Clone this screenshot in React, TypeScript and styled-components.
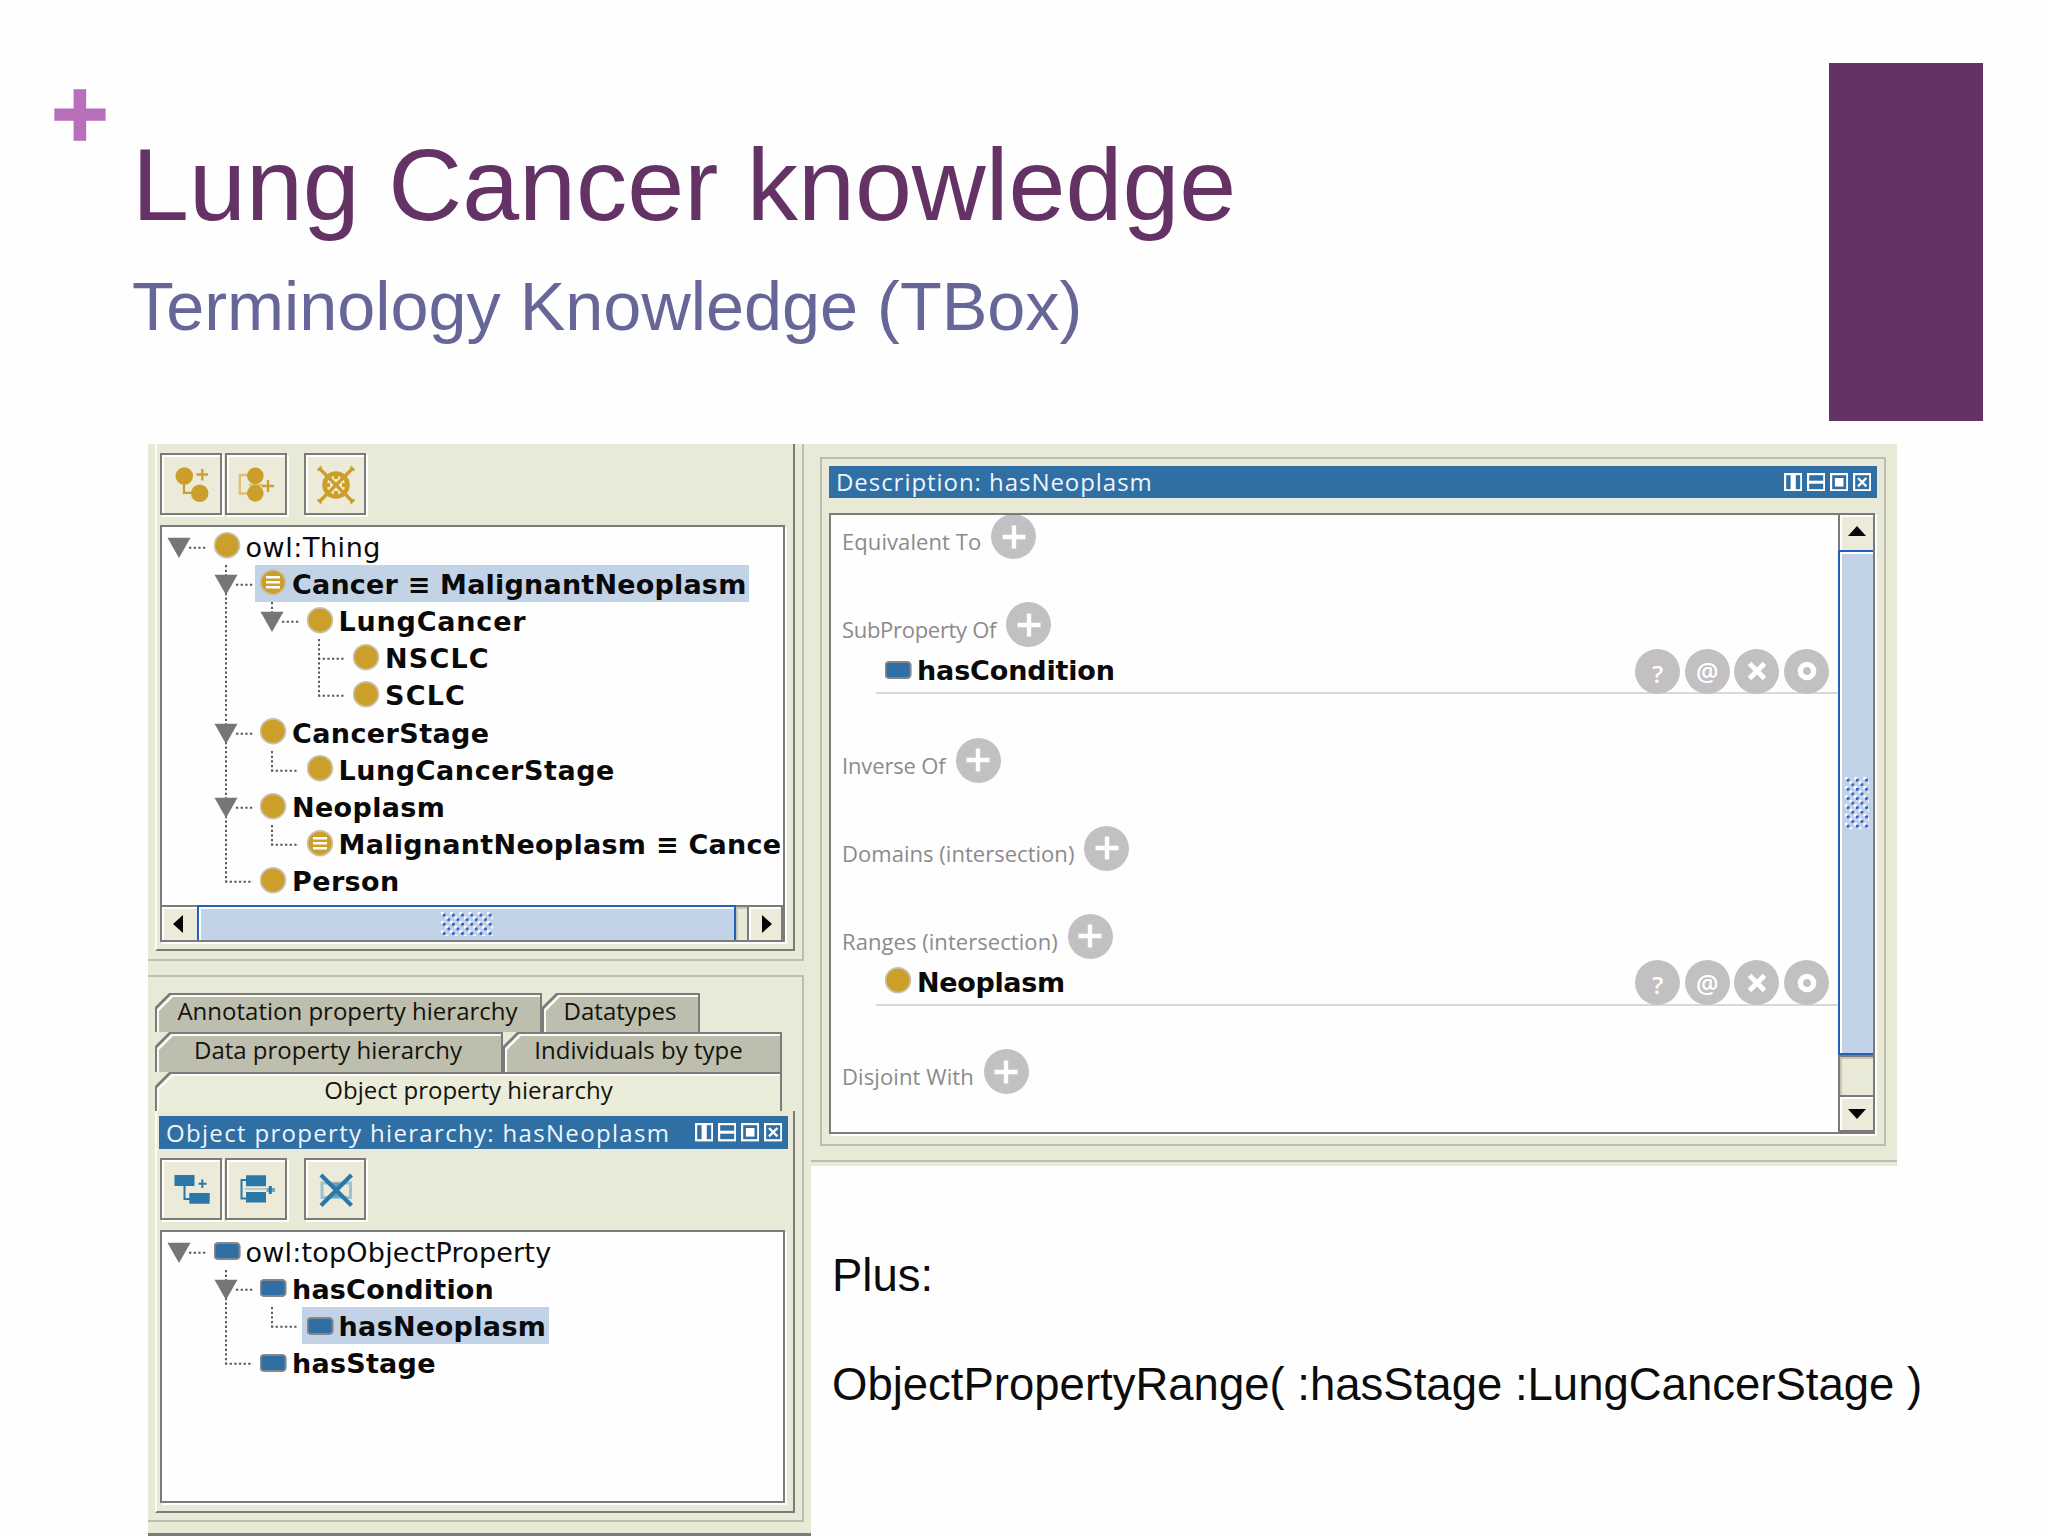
import React from "react";
import styled, { createGlobalStyle, css } from "styled-components";

const beige = "#e8e9d7";
const gray = "#7c7a7a";
const softLine = "#bdbeae";
const gold = "#cc9f2a";
const blue = "#2f6fa4";
const select = "#c2d3e8";

const lucida = `"Open Sans", "Noto Sans", sans-serif`;
const verdana = `"DejaVu Sans", sans-serif`;
const arial = `"Liberation Sans", Arial, sans-serif`;

const GlobalStyle = createGlobalStyle`
  * { box-sizing: border-box; }
  body { margin: 0; background: #fefefe; }
  svg { display: block; flex: none; }
`;

const Slide = styled.main`
  width: 2048px;
  height: 1536px;
  overflow: hidden;
  display: flex;
  flex-direction: column;
  background: #fefefe;
`;

const Header = styled.header`
  height: 444px;
  flex: none;
  display: flex;
  align-items: flex-start;
`;

const PlusMark = styled.div`
  width: 132px;
  padding: 54px 0 0 51px;
  font: bold 99px/120px ${arial};
  color: #b870b8;
  -webkit-text-stroke: 1.6px #b870b8;
`;

const Titles = styled.div`
  flex: 1;
  padding-top: 126px;
`;

const Title = styled.h1`
  margin: 0;
  font: 400 102.4px/118px ${arial};
  color: #643264;
  white-space: nowrap;
`;

const Subtitle = styled.h2`
  margin: 22px 0 0;
  font: 400 68.4px/80px ${arial};
  color: #666699;
  white-space: nowrap;
`;

const AccentBlock = styled.div`
  width: 154px;
  height: 358px;
  margin: 63px 65px 0 0;
  background: #643264;
`;

const Body = styled.div`
  flex: 1;
  display: flex;
  padding-left: 148px;
`;

const LeftColumn = styled.section`
  width: 663px;
  height: 1092px;
  background: ${beige};
  display: flex;
  flex-direction: column;
`;

const Pane = styled.div<{ $h: number; $lower?: boolean }>`
  width: 656px;
  height: ${(p) => p.$h}px;
  flex: none;
  margin-top: ${(p) => (p.$lower ? 14 : 0)}px;
  padding-left: 7px;
  border: 2px solid ${softLine};
  border-left: 0;
  ${(p) => !p.$lower && css`border-top: 0;`}
`;

const Frame = styled.div<{ $h: number; $pad: number }>`
  width: 640px;
  height: ${(p) => p.$h}px;
  padding: ${(p) => p.$pad}px 0 0 3px;
  border: 2px solid ${gray};
  border-top: 0;
  border-left-color: #fdfdf8;
`;

const Toolbar = styled.div`
  display: flex;
  height: 72px;
`;

const ToolButton = styled.button<{ $gap?: number }>`
  width: 62px;
  height: 62px;
  padding: 0;
  margin: 0 0 0 ${(p) => p.$gap ?? 0}px;
  border: 2px solid ${gray};
  background: #ecead9;
  box-shadow: 2px 2px 0 #fff, inset 2px 2px 0 #fff;
  svg { margin: -2px; }
`;

const TreeBox = styled.div<{ $h: number }>`
  width: 625px;
  height: ${(p) => p.$h}px;
  border: 2px solid ${gray};
  background: #fefefe;
  box-shadow: 2px 2px 0 #fff;
  display: flex;
  flex-direction: column;
`;

const Rows = styled.div`
  flex: 1;
  overflow: hidden;
  padding-top: 0.6px;
`;

const Row = styled.div`
  display: flex;
  height: 37.2px;
`;

const Node = styled.div<{ $selected?: boolean }>`
  display: flex;
  align-items: center;
  gap: 5px;
  padding: 0 3px 0 5px;
  background: ${(p) => (p.$selected ? select : "transparent")};
`;

const NodeName = styled.span<{ $plain?: boolean; $track?: number }>`
  font: ${(p) => (p.$plain ? 400 : 700)} 27px/35px ${verdana};
  padding-top: 2px;
  letter-spacing: ${(p) => p.$track ?? 0}px;
  color: #0a0a0a;
  white-space: pre;
`;

const HScroll = styled.div`
  height: 35px;
  flex: none;
  display: flex;
`;

const VScroll = styled.div`
  width: 35px;
  flex: none;
  display: flex;
  flex-direction: column;
  border-left: 2px solid ${gray};
`;

const ArrowButton = styled.div<{ $side: "left" | "right" | "up" | "down" }>`
  width: 35px;
  height: 35px;
  flex: none;
  display: flex;
  align-items: center;
  justify-content: center;
  background: #ecead9;
  box-shadow: inset 2px 2px 0 #fff;
  ${(p) => (p.$side === "left" || p.$side === "right") && css`border-top: 2px solid ${gray};`}
  ${(p) => p.$side === "left" && css`padding-right: 3px;`}
  ${(p) => p.$side === "right" && css`border-left: 2px solid ${gray}; border-right: 2px solid ${gray}; width: 36px; padding-left: 3px;`}
  ${(p) => p.$side === "down" && css`border-top: 2px solid ${gray}; border-bottom: 2px solid ${gray}; width: 33px; height: 37px;`}
  ${(p) => p.$side === "up" && css`width: 33px; padding-bottom: 3px;`}
`;

const Thumb = styled.div<{ $vertical?: boolean }>`
  display: flex;
  align-items: center;
  justify-content: center;
  background: ${select};
  border: 2px solid #2560b8;
  box-shadow: inset 2px 2px 0 #fff;
  ${(p) =>
    p.$vertical
      ? css`height: 505px; margin-left: -2px; border-right: 0;`
      : css`width: 539px; border-bottom: 0;`}
`;

const Grip = styled.div<{ $w: number; $h: number }>`
  width: ${(p) => p.$w}px;
  height: ${(p) => p.$h}px;
  background-image: radial-gradient(circle at 3px 3px, #3560c8 1.4px, transparent 1.7px),
    radial-gradient(circle at 7.6px 7.6px, #3560c8 1.4px, transparent 1.7px),
    radial-gradient(circle at 1.4px 1.4px, #fff 1.4px, transparent 1.7px),
    radial-gradient(circle at 6px 6px, #fff 1.4px, transparent 1.7px);
  background-size: 9.2px 9.2px;
`;

const Track = styled.div`
  flex: 1;
  background: ${beige};
  border-top: 2px solid ${gray};
  box-shadow: inset 2px 2px 0 #c9c8b8;
`;

const TabStrip = styled.div`
  padding-top: 16px;
  width: 627px;
`;

const TabRow = styled.div<{ $h: number }>`
  display: flex;
  height: ${(p) => p.$h}px;
`;

const cut = "polygon(14px 0, 100% 0, 100% 100%, 0 100%, 0 14px)";

const Tab = styled.div<{ $w: number; $active?: boolean }>`
  position: relative;
  z-index: 0;
  width: ${(p) => p.$w}px;
  display: flex;
  justify-content: center;
  background: ${gray};
  clip-path: ${cut};
  &::before,
  &::after {
    content: "";
    position: absolute;
    z-index: -1;
    inset: 2px 2px 0 2px;
    background: #fbfbf4;
    clip-path: ${cut};
  }
  &::after {
    inset: 4px 2px 0 4px;
    background: ${(p) => (p.$active ? "#ebecd9" : softLine)};
  }
`;

const TabName = styled.span<{ $pull?: number }>`
  font: 400 24px/36px ${lucida};
  letter-spacing: 0;
  margin-right: ${(p) => p.$pull ?? 0}px;
  color: #14140c;
  white-space: nowrap;
`;

const TitleBar = styled.div<{ $w: number; $h: number; $pull?: number }>`
  width: ${(p) => p.$w}px;
  height: ${(p) => p.$h}px;
  margin-left: -${(p) => p.$pull ?? 0}px;
  flex: none;
  display: flex;
  align-items: center;
  justify-content: space-between;
  padding: 0 6px 0 7px;
  background: ${blue};
`;

const BarName = styled.span<{ $track?: number }>`
  font: 400 24px/32px ${lucida};
  letter-spacing: ${(p) => p.$track ?? 0}px;
  color: #eef5fb;
  white-space: nowrap;
`;

const WindowIcons = styled.div`
  display: flex;
  gap: 4.6px;
`;

const RightColumn = styled.section`
  display: flex;
  flex-direction: column;
`;

const RightPanel = styled.div`
  width: 1086px;
  height: 722px;
  padding: 13px 0 0 9px;
  background: linear-gradient(${softLine}, ${softLine}) 0 716px / 100% 2px no-repeat, ${beige};
`;

const GroupBox = styled.div`
  width: 1066px;
  height: 689px;
  padding: 7px;
  border: 2px solid ${softLine};
`;

const ContentBox = styled.div`
  width: 1046px;
  height: 621px;
  margin-top: 15px;
  border: 2px solid ${gray};
  background: #fefefe;
  box-shadow: 2px 2px 0 #fff;
  display: flex;
`;

const Sections = styled.div`
  flex: 1;
  overflow: hidden;
`;

const SectionBlock = styled.div`
  padding-bottom: 43px;
  &:first-child { margin-top: -1px; }
`;

const SectionHead = styled.div`
  height: 45px;
  display: flex;
  padding-left: 11px;
  gap: 10px;
`;

const SectionName = styled.span<{ $track?: number }>`
  font: 400 22px/30px ${lucida};
  letter-spacing: ${(p) => p.$track ?? 0}px;
  padding-top: 12px;
  color: #8c8a8c;
  white-space: nowrap;
`;

const ItemRow = styled.div`
  height: 47px;
  margin: 0 0 0.5px 45px;
  padding: 0 9px;
  border-bottom: 2px solid #d9d7d9;
  display: flex;
  align-items: center;
`;

const ItemLabel = styled.div`
  flex: 1;
  display: flex;
  align-items: center;
  gap: 5px;
`;

const Actions = styled.div`
  display: flex;
  gap: 4.6px;
  margin-bottom: -3px;
`;

const Round = styled.span`
  width: 45px;
  height: 45px;
  flex: none;
  border-radius: 50%;
  background: #c3c0c3;
  color: #fff;
  display: flex;
  align-items: center;
  justify-content: center;
`;

const Glyph = styled.span<{ $size: number; $drop: number }>`
  font: 600 ${(p) => p.$size}px/36px ${lucida};
  padding-top: ${(p) => p.$drop}px;
`;

const Notes = styled.div`
  padding: 82px 0 0 21px;
  font: 400 45.5px/55px ${arial};
  color: #0c0c0c;
  white-space: nowrap;
`;

const NoteLine = styled.p`
  margin: 0 0 54px;
`;

const BottomRule = styled.div`
  height: 3px;
  margin-top: auto;
  background: ${gray};
`;

const ToolGap = styled.div`
  height: 9px;
`;

type Guide = " " | "root" | "mid" | "end" | "bar" | "tee" | "elbow";

const GuideCell = ({ kind }: { kind: Guide }) => {
  const dots = { stroke: "#5c5a5c", strokeWidth: 2, strokeDasharray: "2.3 2.35", fill: "none" };
  const toggle = kind === "root" || kind === "mid" || kind === "end";
  return (
    <svg width="46.5" height="37.2" viewBox="0 0 46.5 37.2">
      {(kind === "bar" || kind === "tee" || kind === "mid") && <path d="M17 0V37.2" {...dots} />}
      {kind === "end" && <path d="M17 0V10" {...dots} />}
      {kind === "elbow" && <path d="M17 0V20" {...dots} />}
      {(kind === "elbow" || kind === "tee") && <path d="M16 19.7H44" {...dots} />}
      {toggle && <path d="M27 19.7H44" {...dots} />}
      {toggle && <path d="M5.5 9.8H28.5L17 30Z" fill="#777577" />}
    </svg>
  );
};

const ClassIcon = ({ equal }: { equal?: boolean }) => (
  <svg width="27" height="28" viewBox="0 0 27 28">
    <circle cx="13" cy="13.2" r="12.4" fill={gold} stroke="#c9c2ae" strokeWidth="1.8" />
    {equal && <path d="M6 8.2H20M6 13.2H20M6 18.2H20" stroke="#fff" strokeWidth="2.6" />}
  </svg>
);

const PropertyIcon = () => (
  <svg width="27" height="20" viewBox="0 0 27 20">
    <rect x="0.6" y="2" width="25" height="16" rx="3.5" fill={blue} stroke="#85878a" strokeWidth="2" />
  </svg>
);

type TreeRow = { name: string; guides: Guide[]; plain?: boolean; selected?: boolean; equal?: boolean; track?: number };

const classRows: TreeRow[] = [
  { name: "owl:Thing", guides: ["root"], plain: true, track: 0.55 },
  { name: "Cancer ≡ MalignantNeoplasm", guides: [" ", "mid"], selected: true, equal: true, track: 0.2 },
  { name: "LungCancer", guides: [" ", "bar", "end"], track: 0.8 },
  { name: "NSCLC", guides: [" ", "bar", " ", "tee"], track: 1.2 },
  { name: "SCLC", guides: [" ", "bar", " ", "elbow"], track: 1.2 },
  { name: "CancerStage", guides: [" ", "mid"], track: 0.4 },
  { name: "LungCancerStage", guides: [" ", "bar", "elbow"], track: 0.56 },
  { name: "Neoplasm", guides: [" ", "mid"], track: 0.35 },
  { name: "MalignantNeoplasm ≡ Cance", guides: [" ", "bar", "elbow"], equal: true, track: 0.28 },
  { name: "Person", guides: [" ", "elbow"], track: 0.4 },
];

const propertyRows: TreeRow[] = [
  { name: "owl:topObjectProperty", guides: ["root"], plain: true, track: 0.2 },
  { name: "hasCondition", guides: [" ", "mid"], track: 0.2 },
  { name: "hasNeoplasm", guides: [" ", "bar", "elbow"], selected: true, track: 0.35 },
  { name: "hasStage", guides: [" ", "elbow"], track: 0.25 },
];

const Tree = ({ rows, property }: { rows: TreeRow[]; property?: boolean }) => (
  <Rows>
    {rows.map((r) => (
      <Row key={r.name}>
        {r.guides.map((g, i) => (
          <GuideCell key={i} kind={g} />
        ))}
        <Node $selected={r.selected}>
          {property ? <PropertyIcon /> : <ClassIcon equal={r.equal} />}
          <NodeName $plain={r.plain} $track={r.track}>{r.name}</NodeName>
        </Node>
      </Row>
    ))}
  </Rows>
);

const ClassTools = () => (
  <Toolbar>
    <ToolButton>
      <svg width="62" height="62" fill={gold} stroke={gold} strokeWidth="2.3">
        <circle cx="24.3" cy="23" r="7.6" />
        <circle cx="39.7" cy="40.3" r="7.6" />
        <path d="M24 30V39.8H34M36.5 21.5H48M42.3 16V27.5" fill="none" />
      </svg>
    </ToolButton>
    <ToolButton $gap={3}>
      <svg width="62" height="62" fill={gold} stroke={gold} strokeWidth="2.3">
        <path d="M25 22H14.8V40.5H25M24 32H37" stroke="#dfc073" fill="none" />
        <circle cx="30.3" cy="22.8" r="7.2" />
        <circle cx="30.3" cy="40.3" r="7.2" />
        <path d="M37 33H49M43 27V39" />
      </svg>
    </ToolButton>
    <ToolButton $gap={17}>
      <svg width="62" height="62" fill="none" stroke={gold}>
        <circle cx="32" cy="32" r="11.5" fill="#f3e9cc" strokeWidth="4.5" />
        <path d="M15 15L49 49M49 15L15 49" strokeWidth="3.4" />
        <path d="M13.5 17.5L17.5 13.5M50.5 17.5L46.5 13.5M13.5 46.5L17.5 50.5M50.5 46.5L46.5 50.5" strokeWidth="2" />
        <path d="M32 21V26M32 38V43M21 32H26M38 32H43" strokeWidth="4" />
      </svg>
    </ToolButton>
  </Toolbar>
);

const PropertyTools = () => (
  <Toolbar>
    <ToolButton>
      <svg width="62" height="62" fill="#2b78a8" stroke="#2b78a8" strokeWidth="2">
        <path d="M14.5 17H34.5V28H14.5ZM29.3 35H49.7V45.7H29.3Z" stroke="none" />
        <path d="M24.5 28V41H30M38.5 25.8H46.5M42.3 21.5V30" fill="none" />
      </svg>
    </ToolButton>
    <ToolButton $gap={3}>
      <svg width="62" height="62" fill="#2b78a8" stroke="#2b78a8" strokeWidth="2">
        <path d="M21 17.3H41V28.3H21ZM21 34H41V44.5H21Z" stroke="none" />
        <path d="M22 22H16.5V40.5H22" fill="none" />
        <path d="M20 31H41" stroke="#b7cdcd" />
        <path d="M41.5 32H50" stroke="#6fa5c2" strokeWidth="4" />
        <path d="M45.3 28V36" strokeWidth="3" />
      </svg>
    </ToolButton>
    <ToolButton $gap={17}>
      <svg width="62" height="62" fill="none" stroke="#2b78a8">
        <rect x="18" y="25" width="28.5" height="14.5" stroke="#9cc3cd" strokeWidth="3" />
        <path d="M26 25H38L34 32L38 39.5H26L30 32Z" fill="#5f9fb8" stroke="none" />
        <path d="M17 17L47.5 47.5M47.5 17L17 47.5" strokeWidth="4.2" />
      </svg>
    </ToolButton>
  </Toolbar>
);

const WinIcons = () => (
  <WindowIcons>
    {[
      <path key="c" d="M9.2 1V17.5" strokeWidth="5.2" />,
      <path key="r" d="M1 9.2H17.5" strokeWidth="3" />,
      <path key="m" d="M9.2 5V13.6" strokeWidth="8.6" />,
      <path key="x" d="M5 5L13.4 13.4M13.4 5L5 13.4" strokeWidth="2.4" />,
    ].map((mark, i) => (
      <svg key={i} width="18.4" height="18.4" viewBox="0 0 18.4 18.4" stroke="#fff" fill="none">
        <rect x="1.1" y="1.1" width="16.2" height="16.2" strokeWidth="2.2" />
        {mark}
      </svg>
    ))}
  </WindowIcons>
);

const Arrow = ({ d, w, h }: { d: string; w: number; h: number }) => (
  <svg width={w} height={h} viewBox={`0 0 ${w} ${h}`}>
    <path d={d} fill="#050505" />
  </svg>
);

const AddButton = () => (
  <Round>
    <svg width="24" height="24" stroke="#fff" strokeWidth="4.4">
      <path d="M0.5 12H23.5M12 0.5V23.5" />
    </svg>
  </Round>
);

const Item = ({ name, property, track }: { name: string; property?: boolean; track?: number }) => (
  <ItemRow>
    <ItemLabel>
      {property ? <PropertyIcon /> : <ClassIcon />}
      <NodeName $track={track}>{name}</NodeName>
    </ItemLabel>
    <Actions>
      <Round>
        <Glyph $size={24} $drop={5}>?</Glyph>
      </Round>
      <Round>
        <Glyph $size={25} $drop={0}>@</Glyph>
      </Round>
      <Round>
        <svg width="20" height="20" stroke="#fff" strokeWidth="5">
          <path d="M2.5 2.5L17.5 17.5M17.5 2.5L2.5 17.5" />
        </svg>
      </Round>
      <Round>
        <svg width="20" height="20" stroke="#fff" strokeWidth="5.4" fill="none">
          <circle cx="10" cy="10" r="6.6" />
        </svg>
      </Round>
    </Actions>
  </ItemRow>
);

type Section = { name: string; track: number; item?: string; itemTrack?: number; property?: boolean };

const sections: Section[] = [
  { name: "Equivalent To", track: 0.08 },
  { name: "SubProperty Of", track: -0.3, item: "hasCondition", itemTrack: -0.15, property: true },
  { name: "Inverse Of", track: -0.15 },
  { name: "Domains (intersection)", track: 0.03 },
  { name: "Ranges (intersection)", track: 0.06, item: "Neoplasm", itemTrack: -0.35 },
  { name: "Disjoint With", track: 0.1 },
];

export default function App() {
  return (
    <Slide>
      <GlobalStyle />
      <Header>
        <PlusMark>+</PlusMark>
        <Titles>
          <Title>Lung Cancer knowledge</Title>
          <Subtitle>Terminology Knowledge (TBox)</Subtitle>
        </Titles>
        <AccentBlock />
      </Header>
      <Body>
        <LeftColumn>
          <Pane $h={517}>
            <Frame $h={507} $pad={9}>
              <ClassTools />
              <TreeBox $h={417}>
                <Tree rows={classRows} />
                <HScroll>
                  <ArrowButton $side="left">
                    <Arrow w={10} h={18} d="M10 0V18L0 9Z" />
                  </ArrowButton>
                  <Thumb>
                    <Grip $w={52} $h={24} />
                  </Thumb>
                  <Track />
                  <ArrowButton $side="right">
                    <Arrow w={10} h={18} d="M0 0V18L10 9Z" />
                  </ArrowButton>
                </HScroll>
              </TreeBox>
            </Frame>
          </Pane>
          <Pane $h={547} $lower>
            <TabStrip>
              <TabRow $h={39}>
                <Tab $w={387}><TabName $pull={2}>Annotation property hierarchy</TabName></Tab>
                <Tab $w={158}><TabName $pull={2}>Datatypes</TabName></Tab>
              </TabRow>
              <TabRow $h={40}>
                <Tab $w={348}><TabName $pull={2}>Data property hierarchy</TabName></Tab>
                <Tab $w={279}><TabName $pull={8}>Individuals by type</TabName></Tab>
              </TabRow>
              <TabRow $h={39}>
                <Tab $w={627} $active><TabName>Object property hierarchy</TabName></Tab>
              </TabRow>
            </TabStrip>
            <Frame $h={402} $pad={5}>
              <TitleBar $w={629} $h={33} $pull={1}>
                <BarName $track={1.32}>Object property hierarchy: hasNeoplasm</BarName>
                <WinIcons />
              </TitleBar>
              <ToolGap />
              <PropertyTools />
              <TreeBox $h={273}>
                <Tree rows={propertyRows} property />
              </TreeBox>
            </Frame>
          </Pane>
          <BottomRule />
        </LeftColumn>
        <RightColumn>
          <RightPanel>
            <GroupBox>
              <TitleBar $w={1048} $h={32}>
                <BarName $track={0.95}>Description: hasNeoplasm</BarName>
                <WinIcons />
              </TitleBar>
              <ContentBox>
                <Sections>
                  {sections.map((s) => (
                    <SectionBlock key={s.name}>
                      <SectionHead>
                        <SectionName $track={s.track}>{s.name}</SectionName>
                        <AddButton />
                      </SectionHead>
                      {s.item && <Item name={s.item} property={s.property} track={s.itemTrack} />}
                    </SectionBlock>
                  ))}
                </Sections>
                <VScroll>
                  <ArrowButton $side="up">
                    <Arrow w={18} h={10} d="M0 10H18L9 0Z" />
                  </ArrowButton>
                  <Thumb $vertical>
                    <Grip $w={24} $h={52} />
                  </Thumb>
                  <Track />
                  <ArrowButton $side="down">
                    <Arrow w={18} h={10} d="M0 0H18L9 10Z" />
                  </ArrowButton>
                </VScroll>
              </ContentBox>
            </GroupBox>
          </RightPanel>
          <Notes>
            <NoteLine>Plus:</NoteLine>
            <NoteLine>ObjectPropertyRange( :hasStage :LungCancerStage )</NoteLine>
          </Notes>
        </RightColumn>
      </Body>
    </Slide>
  );
}
